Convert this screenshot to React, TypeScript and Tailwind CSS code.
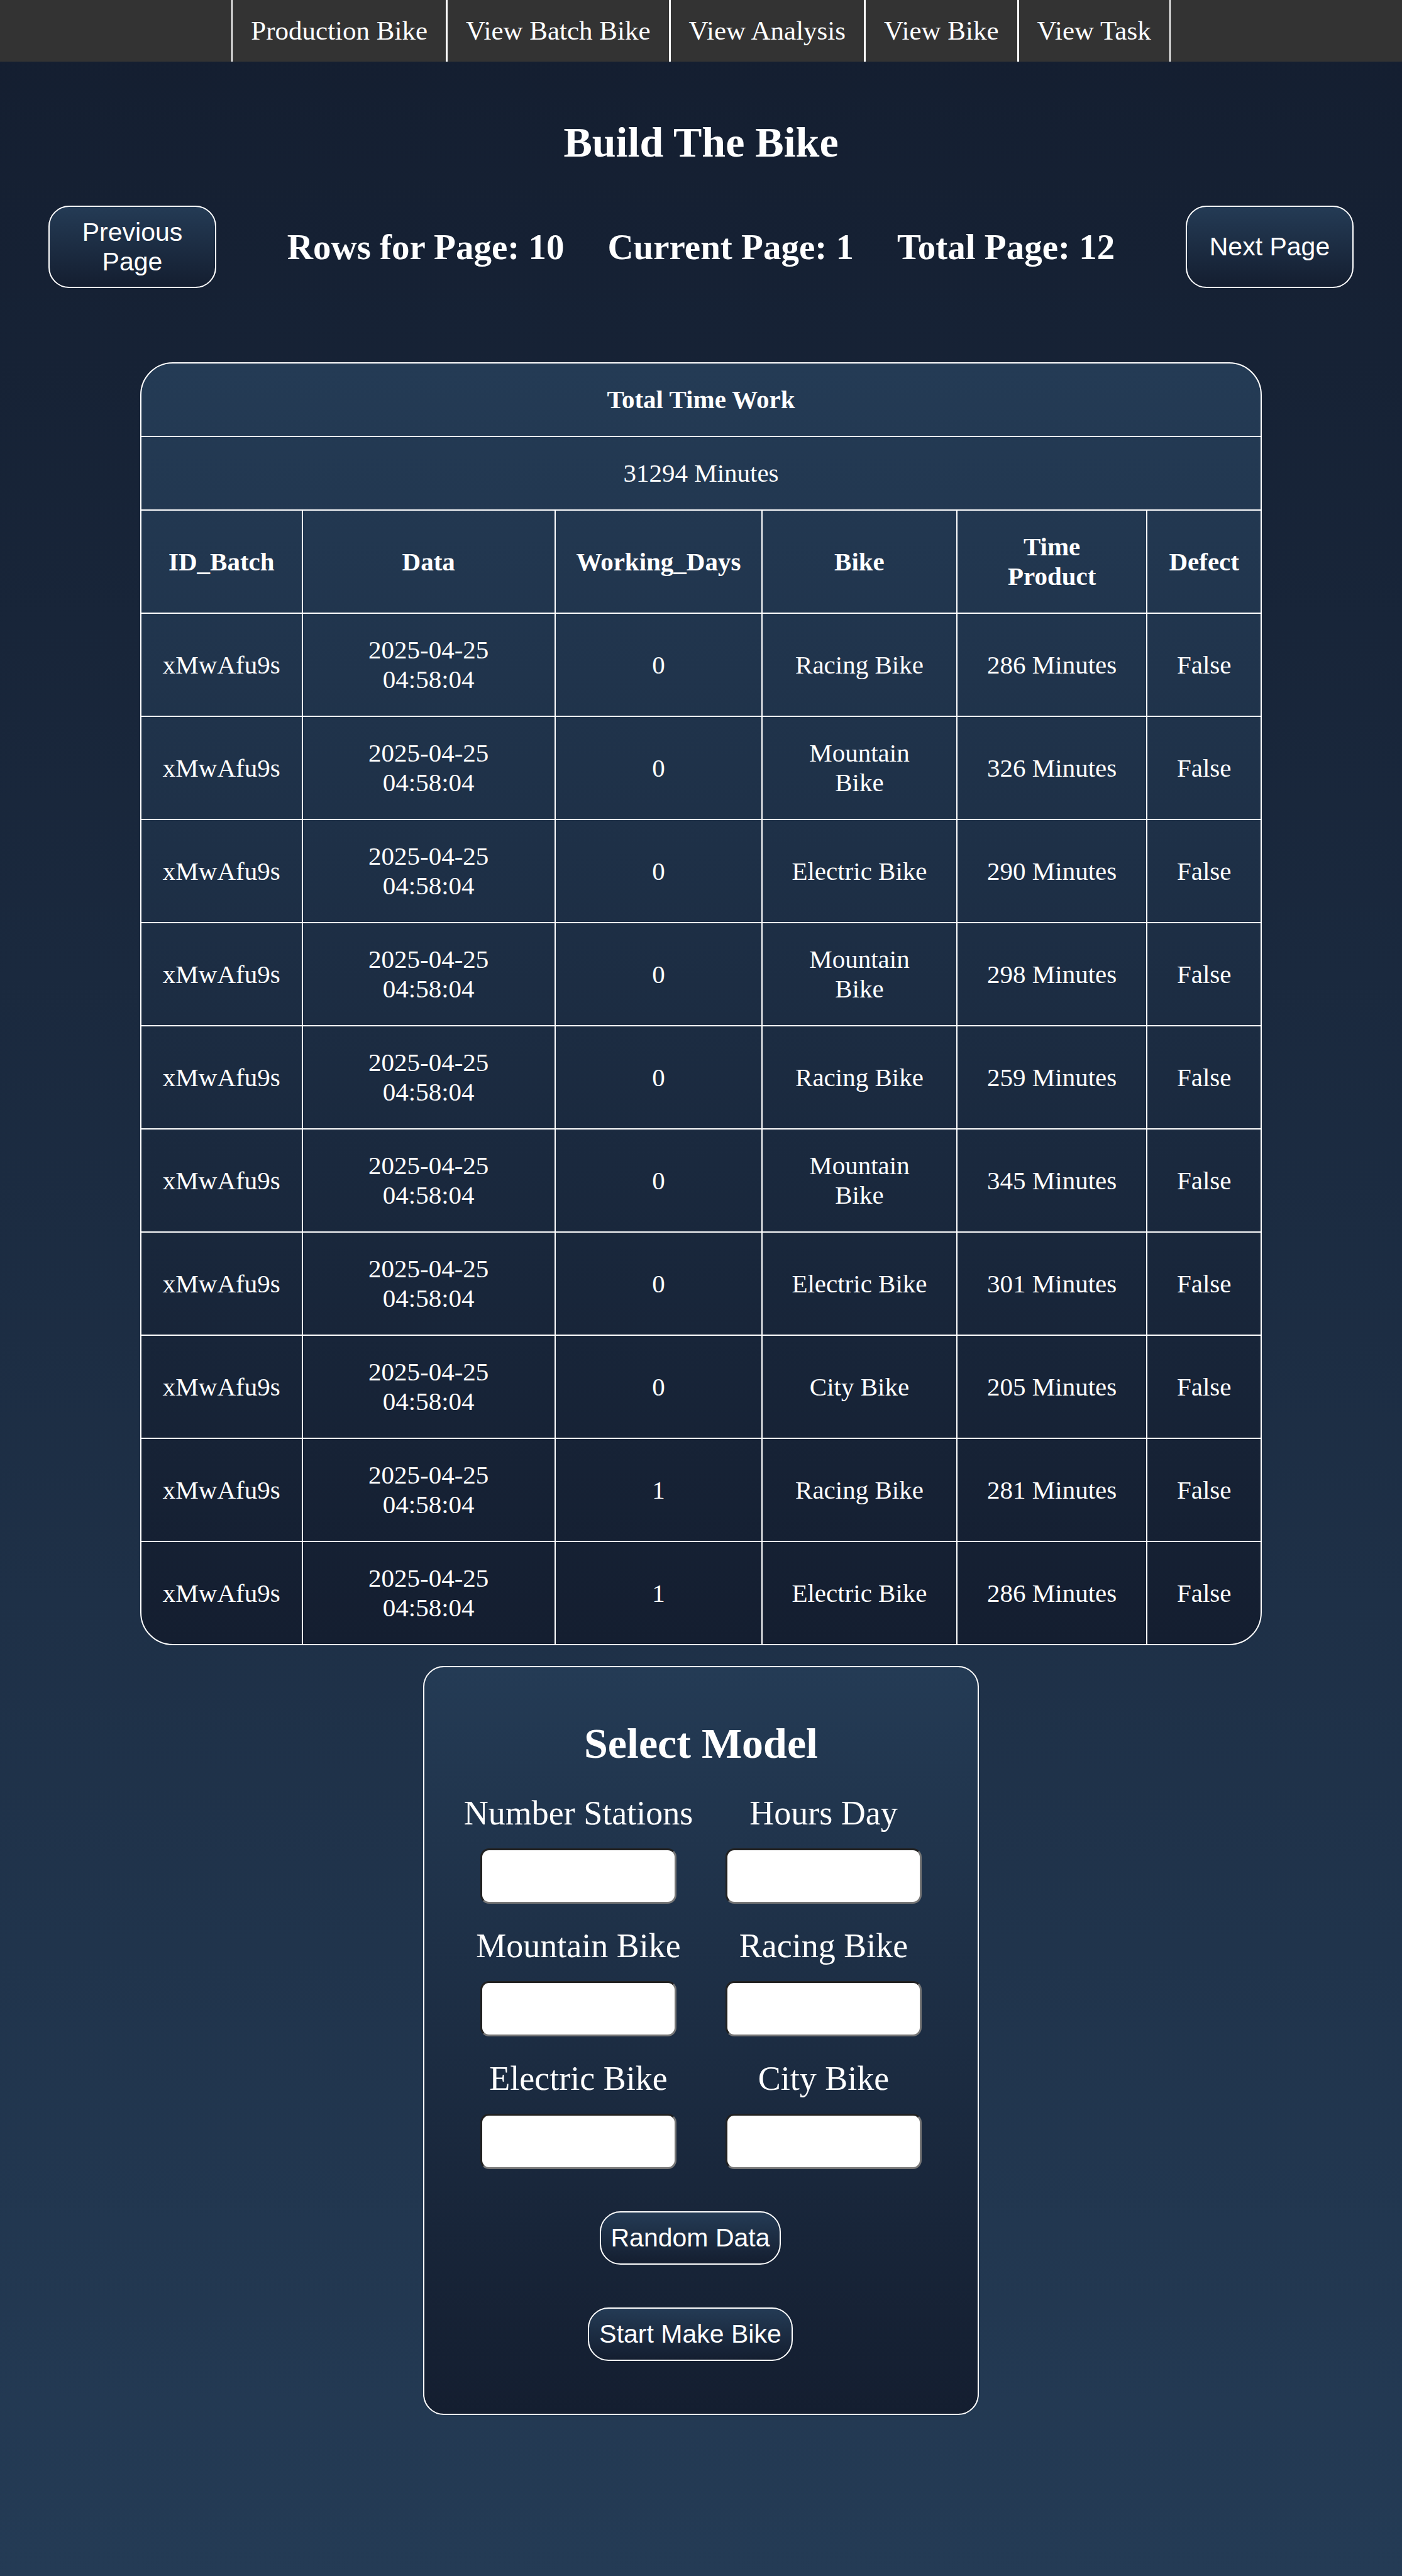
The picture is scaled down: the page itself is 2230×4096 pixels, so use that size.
import React from "react";

const NAV = ["Production Bike", "View Batch Bike", "View Analysis", "View Bike", "View Task"];

const COLUMNS = ["ID_Batch", "Data", "Working_Days", "Bike", "Time Product", "Defect"];

const ROWS: [string, string, string][] = [
  ["0", "Racing Bike", "286"],
  ["0", "Mountain Bike", "326"],
  ["0", "Electric Bike", "290"],
  ["0", "Mountain Bike", "298"],
  ["0", "Racing Bike", "259"],
  ["0", "Mountain Bike", "345"],
  ["0", "Electric Bike", "301"],
  ["0", "City Bike", "205"],
  ["1", "Racing Bike", "281"],
  ["1", "Electric Bike", "286"],
];

const FIELDS = ["Number Stations", "Hours Day", "Mountain Bike", "Racing Bike", "Electric Bike", "City Bike"];

const PANEL = "border-2 border-white bg-[linear-gradient(to_bottom,#243b55,#141e30)]";
const BUTTON =
  "cursor-pointer rounded-[33px] text-center font-['Liberation_Sans',Arial,sans-serif] text-[41px] leading-[47px] " + PANEL;
const CELL = "border-t-2 border-l-2 border-white px-8 py-[34px] align-middle first:border-l-0";

function NavBar() {
  return (
    <nav className="bg-[#333333]">
      <ul className="flex justify-center">
        {NAV.map((label) => (
          <li key={label} className="border-l-[3px] border-white first:border-l-2 last:border-r-2">
            <a href="#" className="block px-[29px] pt-6 pb-[25px] text-[43px] leading-[49px]">
              {label}
            </a>
          </li>
        ))}
      </ul>
    </nav>
  );
}

function Pager() {
  return (
    <div className="mt-[62px] flex items-center justify-between px-[77px]">
      <button type="button" className={BUTTON + " h-[131px] w-[267px] px-8"}>
        Previous Page
      </button>
      <div className="flex gap-[69px] text-[57px] leading-[66px] font-bold">
        <p>Rows for Page: 10</p>
        <p>Current Page: 1</p>
        <p>Total Page: 12</p>
      </div>
      <button type="button" className={BUTTON + " h-[131px] w-[267px] px-4"}>
        Next Page
      </button>
    </div>
  );
}

function BatchTable() {
  return (
    <div className={"mx-auto mt-[118px] w-4/5 overflow-hidden rounded-[52px] " + PANEL}>
      <table className="w-full table-fixed border-separate border-spacing-0 text-center text-[41px] leading-[47px]">
        <colgroup>
          <col className="w-[14.3%]" />
          <col className="w-[22.6%]" />
          <col className="w-[18.5%]" />
          <col className="w-[17.4%]" />
          <col className="w-[17%]" />
          <col className="w-[10.2%]" />
        </colgroup>
        <thead>
          <tr>
            <th colSpan={6} className="px-8 py-[34px]">
              Total Time Work
            </th>
          </tr>
          <tr>
            <td colSpan={6} className={CELL}>
              31294 Minutes
            </td>
          </tr>
          <tr>
            {COLUMNS.map((name) => (
              <th key={name} scope="col" className={CELL}>
                {name}
              </th>
            ))}
          </tr>
        </thead>
        <tbody>
          {ROWS.map(([days, bike, minutes], i) => (
            <tr key={i}>
              <td className={CELL}>xMwAfu9s</td>
              <td className={CELL}>2025-04-25 04:58:04</td>
              <td className={CELL}>{days}</td>
              <td className={CELL}>{bike}</td>
              <td className={CELL}>{minutes} Minutes</td>
              <td className={CELL}>False</td>
            </tr>
          ))}
        </tbody>
      </table>
    </div>
  );
}

function ModelForm() {
  return (
    <form
      className={"mx-auto mt-[33px] w-[884px] rounded-[33px] px-[50px] pt-[82px] pb-[84px] text-center " + PANEL}
      onSubmit={(e) => e.preventDefault()}
    >
      <h2 className="text-[68px] leading-[78px] font-bold">Select Model</h2>
      <div className="mt-[41px] grid grid-cols-2 gap-y-9">
        {FIELDS.map((label) => {
          const id = label.toLowerCase().replace(" ", "-");
          return (
            <div key={id} className="flex flex-col items-center gap-[25px]">
              <label htmlFor={id} className="text-[54px] leading-[62px] whitespace-nowrap">
                {label}
              </label>
              <input
                id={id}
                type="text"
                className="h-[88px] w-4/5 rounded-[14px] border-[3px] border-t-[#212121] border-r-[#767676] border-b-[#767676] border-l-[#212121] bg-white px-3 text-[41px] text-black"
              />
            </div>
          );
        })}
      </div>
      <div className="mt-[67px] mr-[34px] flex flex-col items-center gap-[68px]">
        <button type="button" className={BUTTON + " px-4 py-[17px]"}>
          Random Data
        </button>
        <button type="submit" className={BUTTON + " px-4 py-[17px]"}>
          Start Make Bike
        </button>
      </div>
    </form>
  );
}

export default function App() {
  return (
    <div className="min-h-screen bg-[linear-gradient(to_top,#243b55,#141e30)] font-['Liberation_Serif','Times_New_Roman',serif] text-white">
      <NavBar />
      <main>
        <h1 className="mt-[89px] text-center text-[68px] leading-[78px] font-bold">Build The Bike</h1>
        <Pager />
        <BatchTable />
        <ModelForm />
      </main>
    </div>
  );
}
